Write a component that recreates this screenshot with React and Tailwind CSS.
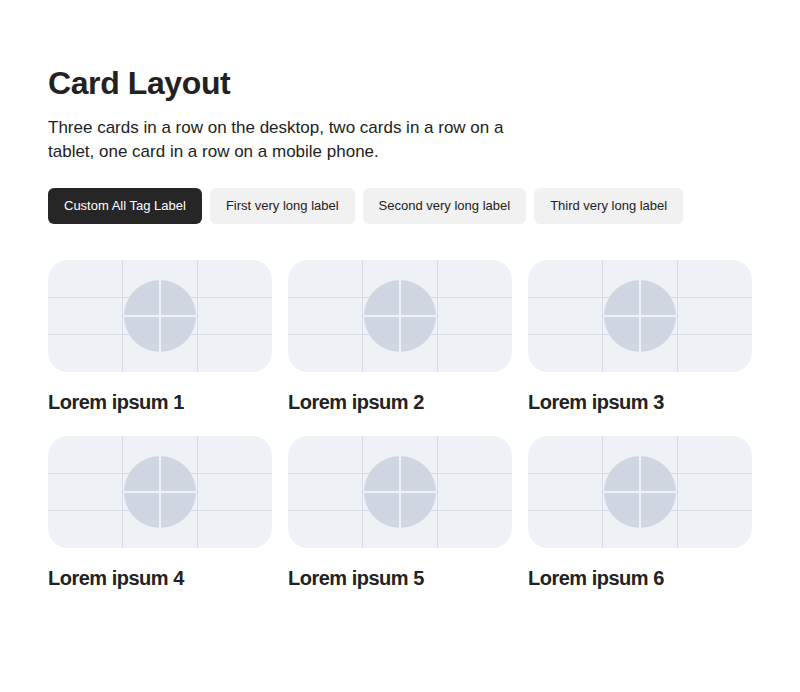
import React, { useState } from 'react';

const tags = ['Custom All Tag Label', 'First very long label', 'Second very long label', 'Third very long label'];
const cards = [1, 2, 3, 4, 5, 6].map((n) => `Lorem ipsum ${n}`);

const Placeholder = () => (
    <svg width="224" height="112" viewBox="0 0 224 112" className="block">
        <rect width="224" height="112" fill="#eef1f6" />
        <line x1="74.5" y1="0" x2="74.5" y2="112" stroke="#d5dae6" />
        <line x1="149.5" y1="0" x2="149.5" y2="112" stroke="#d5dae6" />
        <line x1="0" y1="37.5" x2="224" y2="37.5" stroke="#d5dae6" />
        <line x1="0" y1="74.5" x2="224" y2="74.5" stroke="#d5dae6" />
        <circle cx="112" cy="56" r="36" fill="#cfd6e2" />
        <line x1="112" y1="20" x2="112" y2="92" stroke="#eef1f6" strokeWidth="2" />
        <line x1="76" y1="56" x2="148" y2="56" stroke="#eef1f6" strokeWidth="2" />
    </svg>
);

const App = () => {
    const [active, setActive] = useState(0);

    return (
        <div className="min-h-screen bg-white px-12 pt-[63px] text-[#222] font-['Liberation_Sans',Arial,sans-serif]">
            <h1 className="text-[32px] leading-10 font-semibold tracking-[-0.4px]">Card Layout</h1>
            <p className="mt-[13px] max-w-[480px] text-[17px] leading-6">
                Three cards in a row on the desktop, two cards in a row on a tablet, one card in a row on a mobile phone.
            </p>

            <div className="mt-6 flex gap-2">
                {tags.map((t, i) => (
                    <button
                        key={t}
                        onClick={() => setActive(i)}
                        className={`h-9 rounded-md px-4 text-[13px] ${i === active ? 'bg-[#262626] text-white' : 'bg-[#f1f1f1] text-[#222]'}`}
                    >
                        {t}
                    </button>
                ))}
            </div>

            <div className="mt-9 grid grid-cols-3 gap-x-4 gap-y-5">
                {cards.map((c) => (
                    <div key={c}>
                        <div className="h-28 overflow-hidden rounded-[20px]">
                            <Placeholder />
                        </div>
                        <h2 className="mt-4 text-xl leading-7 font-semibold tracking-[-0.5px]">{c}</h2>
                    </div>
                ))}
            </div>
        </div>
    );
};

export default App;
